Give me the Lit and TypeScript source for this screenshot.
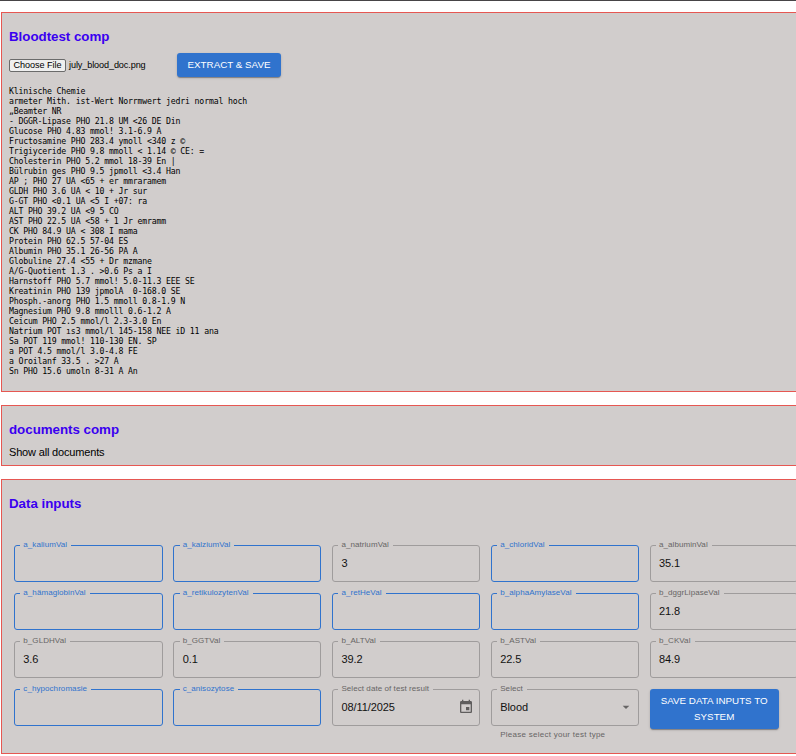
import { LitElement, html, css, nothing } from "lit";
import { customElement, property } from "lit/decorators.js";

const REPORT = `Klinische Chemie
armeter Mith. ist-Wert Norrmwert jedri normal hoch
„Beamter NR
- DGGR-Lipase PHO 21.8 UM <26 DE Din
Glucose PHO 4.83 mmol! 3.1-6.9 A
Fructosamine PHO 283.4 ymoll <340 z ©
Trigiyceride PHO 9.8 mmoll < 1.14 © CE: =
Cholesterin PHO 5.2 mmol 18-39 En |
Bülrubin ges PHO 9.5 jpmoll <3.4 Han
AP ; PHO 27 UA <65 + er mmraramem
GLDH PHO 3.6 UA < 10 + Jr sur
G-GT PHO <0.1 UA <5 I +07: ra
ALT PHO 39.2 UA <9 5 CO
AST PHO 22.5 UA <58 + 1 Jr emramm
CK PHO 84.9 UA < 308 I mama
Protein PHO 62.5 57-04 ES
Albumin PHO 35.1 26-56 PA A
Globuline 27.4 <55 + Dr mzmane
A/G-Quotient 1.3 . >0.6 Ps a I
Harnstoff PHO 5.7 mmol! 5.0-11.3 EEE SE
Kreatinin PHO 139 jpmolA  0-168.0 SE
Phosph.-anorg PHO 1.5 mmoll 0.8-1.9 N
Magnesium PHO 9.8 mmolll 0.6-1.2 A
Ceicum PHO 2.5 mmol/l 2.3-3.0 En
Natrium POT ıs3 mmol/l 145-158 NEE iD 11 ana
Sa POT 119 mmol! 110-130 EN. SP
a POT 4.5 mmol/l 3.0-4.8 FE
a Oroilanf 33.5 . >27 A
Sn PHO 15.6 umoln 8-31 A An`;

const FIELDS: [string, string][] = [
  ["a_kaliumVal", ""],
  ["a_kalziumVal", ""],
  ["a_natriumVal", "3"],
  ["a_chloridVal", ""],
  ["a_albuminVal", "35.1"],
  ["a_hämaglobinVal", ""],
  ["a_retikulozytenVal", ""],
  ["a_retHeVal", ""],
  ["b_alphaAmylaseVal", ""],
  ["b_dggrLipaseVal", "21.8"],
  ["b_GLDHVal", "3.6"],
  ["b_GGTVal", "0.1"],
  ["b_ALTVal", "39.2"],
  ["b_ASTVal", "22.5"],
  ["b_CKVal", "84.9"],
  ["c_hypochromasie", ""],
  ["c_anisozytose", ""],
];

@customElement("outlined-field")
export class OutlinedField extends LitElement {
  @property() label = "";
  @property() value = "";
  @property() icon = "";
  @property() helper = "";

  static styles = css`
    :host {
      display: block;
      min-width: 0;
    }
    .box {
      box-sizing: border-box;
      height: 42px;
      margin: -5px 0 0;
      padding: 0 8.33px 0 5.33px;
      border: 1px solid #9f9c9c;
      border-radius: 3px;
      min-width: 0;
    }
    .label {
      height: 11px;
      padding: 0 4px 0 3px;
      font-size: 8px;
      line-height: 9px;
      letter-spacing: 0.07px;
      color: #676565;
      white-space: nowrap;
    }
    .empty {
      border-color: #3073cd;
    }
    .empty .label {
      color: #3073cd;
    }
    .content {
      display: flex;
      align-items: center;
      justify-content: space-between;
      height: 24px;
      padding-left: 3px;
      font-size: 11px;
      letter-spacing: -0.08px;
      color: #111;
    }
    .calendar {
      width: 16px;
      height: 16px;
      margin-right: -3px;
      fill: #5f5d5d;
    }
    .arrow {
      width: 16px;
      height: 16px;
      margin-right: -4px;
      fill: #676565;
    }
    .helper {
      margin: 2px 0 0 9.33px;
      font-size: 8px;
      line-height: 13px;
      letter-spacing: 0.26px;
      color: #676565;
    }
  `;

  render() {
    return html`
      <fieldset class="box ${this.value ? "" : "empty"}">
        <legend class="label">${this.label}</legend>
        <div class="content">
          <span>${this.value}</span>
          ${this.icon === "calendar"
            ? html`<svg class="calendar" viewBox="0 0 24 24">
                <path d="M17 12h-5v5h5v-5zM16 1v2H8V1H6v2H5c-1.11 0-1.99.9-1.99 2L3 19c0 1.1.89 2 2 2h14c1.1 0 2-.9 2-2V5c0-1.1-.9-2-2-2h-1V1h-2zm3 18H5V8h14v11z" />
              </svg>`
            : nothing}
          ${this.icon === "arrow"
            ? html`<svg class="arrow" viewBox="0 0 24 24"><path d="M7 10l5 5 5-5z" /></svg>`
            : nothing}
        </div>
      </fieldset>
      ${this.helper ? html`<div class="helper">${this.helper}</div>` : nothing}
    `;
  }
}

@customElement("app-root")
export class AppRoot extends LitElement {
  static styles = css`
    :host {
      display: block;
      box-sizing: border-box;
      height: 756px;
      overflow: hidden;
      border-top: 1px solid #464446;
      padding: 11px 0 0 1px;
      background: #fff;
      color: #000;
      font-family: "Liberation Sans", Arial, sans-serif;
    }
    .panel {
      box-sizing: border-box;
      width: 830px;
      margin-bottom: 13px;
      padding: 0 7px;
      border: 1px solid #e65752;
      background: #d1cdcc;
      overflow: hidden;
    }
    .blood {
      height: 380px;
    }
    .documents {
      height: 61px;
    }
    .data {
      height: 275px;
    }
    .title {
      margin: 16px 0 0;
      font-size: 13.33px;
      line-height: 16px;
      font-weight: bold;
      letter-spacing: -0.02px;
      color: #3a00f0;
    }
    .upload {
      display: flex;
      align-items: center;
      height: 24px;
      margin-top: 8px;
      font-size: 9.1px;
      letter-spacing: -0.1px;
    }
    .choose {
      box-sizing: border-box;
      width: 57px;
      height: 13px;
      padding: 0;
      border: 1px solid #6b6b6b;
      border-radius: 2px;
      background: #efefef;
      color: #000;
      font: inherit;
      line-height: 11px;
      letter-spacing: -0.03px;
      text-align: center;
    }
    .filename {
      width: 108px;
      padding-left: 3px;
    }
    .button {
      box-sizing: border-box;
      border: 0;
      border-radius: 3px;
      background: #3073cd;
      color: #fff;
      font-family: inherit;
      font-weight: 500;
      font-size: 9.8px;
      line-height: 16px;
      letter-spacing: 0;
      text-align: center;
      box-shadow: 0 2px 1px -1px rgba(0, 0, 0, 0.2), 0 1px 1px rgba(0, 0, 0, 0.14),
        0 1px 3px rgba(0, 0, 0, 0.12);
    }
    .extract {
      width: 104px;
      height: 24px;
      padding: 0;
    }
    .save {
      width: 129px;
      height: 40px;
      padding: 4px 8px;
    }
    .report {
      margin: 9px 0 0;
      font-family: "DejaVu Sans Mono", monospace;
      font-size: 8.2px;
      letter-spacing: -0.17px;
      line-height: 10px;
    }
    .show-all {
      margin-top: 6px;
      font-size: 11px;
      letter-spacing: -0.17px;
      line-height: 16px;
    }
    .grid {
      display: grid;
      grid-template-columns: 148.5px repeat(4, 148px);
      grid-auto-rows: 37px;
      gap: 11px 10.8px;
      margin: 33px 0 0 5px;
    }
  `;

  render() {
    return html`
      <section class="panel blood">
        <h2 class="title">Bloodtest comp</h2>
        <div class="upload">
          <button class="choose">Choose File</button>
          <span class="filename">july_blood_doc.png</span>
          <button class="button extract">EXTRACT &amp; SAVE</button>
        </div>
        <pre class="report">${REPORT}</pre>
      </section>
      <section class="panel documents">
        <h2 class="title">documents comp</h2>
        <div class="show-all">Show all documents</div>
      </section>
      <section class="panel data">
        <h2 class="title">Data inputs</h2>
        <div class="grid">
          ${FIELDS.map(
            ([label, value]) => html`<outlined-field .label=${label} .value=${value}></outlined-field>`
          )}
          <outlined-field label="Select date of test result" value="08/11/2025" icon="calendar"></outlined-field>
          <outlined-field label="Select" value="Blood" icon="arrow" helper="Please select your test type"></outlined-field>
          <button class="button save">SAVE DATA INPUTS TO SYSTEM</button>
        </div>
      </section>
    `;
  }
}
